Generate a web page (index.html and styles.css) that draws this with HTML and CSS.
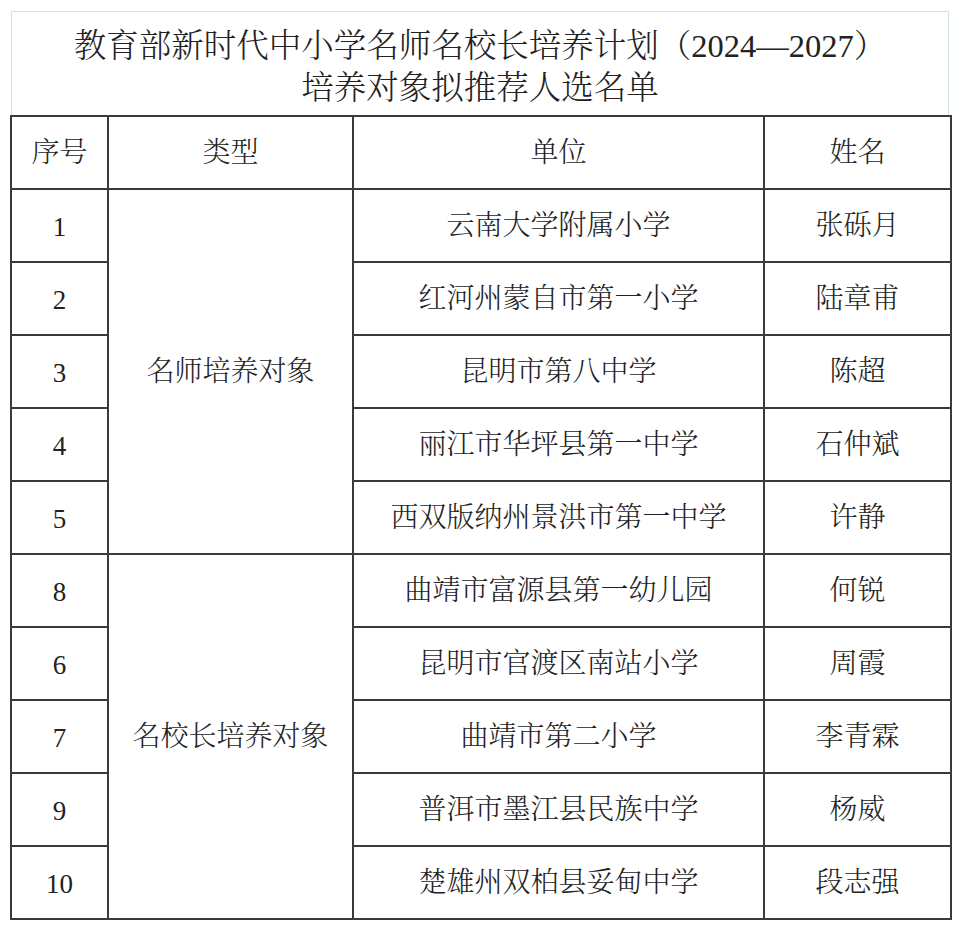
FILE: index.html
```html
<!DOCTYPE html>
<html lang="zh-CN">
<head>
<meta charset="utf-8">
<title>培养对象拟推荐人选名单</title>
<link rel="stylesheet" href="styles.css">
</head>
<body>
<div class="page">
  <div class="title-box">
    <div class="title">教育部新时代中小学名师名校长培养计划（2024—2027）<br>培养对象拟推荐人选名单</div>
  </div>
  <table class="list">
    <colgroup>
      <col class="c-no"><col class="c-type"><col class="c-unit"><col class="c-name">
    </colgroup>
    <tr><td>序号</td><td>类型</td><td>单位</td><td>姓名</td></tr>
    <tr><td class="num">1</td><td rowspan="5">名师培养对象</td><td>云南大学附属小学</td><td>张砾月</td></tr>
    <tr><td class="num">2</td><td>红河州蒙自市第一小学</td><td>陆章甫</td></tr>
    <tr><td class="num">3</td><td>昆明市第八中学</td><td>陈超</td></tr>
    <tr><td class="num">4</td><td>丽江市华坪县第一中学</td><td>石仲斌</td></tr>
    <tr><td class="num">5</td><td>西双版纳州景洪市第一中学</td><td>许静</td></tr>
    <tr><td class="num">8</td><td rowspan="5">名校长培养对象</td><td>曲靖市富源县第一幼儿园</td><td>何锐</td></tr>
    <tr><td class="num">6</td><td>昆明市官渡区南站小学</td><td>周霞</td></tr>
    <tr><td class="num">7</td><td>曲靖市第二小学</td><td>李青霖</td></tr>
    <tr><td class="num">9</td><td>普洱市墨江县民族中学</td><td>杨威</td></tr>
    <tr><td class="num">10</td><td>楚雄州双柏县妥甸中学</td><td>段志强</td></tr>
  </table>
</div>
</body>
</html>
```

FILE: styles.css
```css
html, body {
  margin: 0;
  padding: 0;
  background: #ffffff;
}

body {
  font-family: "Liberation Serif", "Noto Serif CJK SC", "Noto Sans CJK SC", serif;
  color: #222222;
  font-weight: 300;
}

.page {
  padding: 11px 10px 0 10px;
  width: 940px;
}

.title-box {
  margin-left: 1px;
  margin-right: 1px;
  height: 104px;
  border: 1px solid #cfe7d3;
  border-bottom: none;
  display: flex;
  align-items: center;
  justify-content: center;
  box-sizing: border-box;
  padding-top: 6px;
}

.title {
  font-size: 32.5px;
  line-height: 42px;
  text-align: center;
  color: #222222;
}

.list {
  border-collapse: collapse;
  width: 940px;
  table-layout: fixed;
}

.c-no { width: 97px; }
.c-type { width: 245px; }
.c-unit { width: 411px; }
.c-name { width: 187px; }

.list td {
  border: 2px solid #3a3a3a;
  height: 71px;
  padding: 0;
  text-align: center;
  vertical-align: middle;
  font-size: 28px;
  line-height: 30px;
  color: #222222;
}

.list td.num {
  font-size: 27px;
  height: 68px;
  padding-top: 3px;
}
```
